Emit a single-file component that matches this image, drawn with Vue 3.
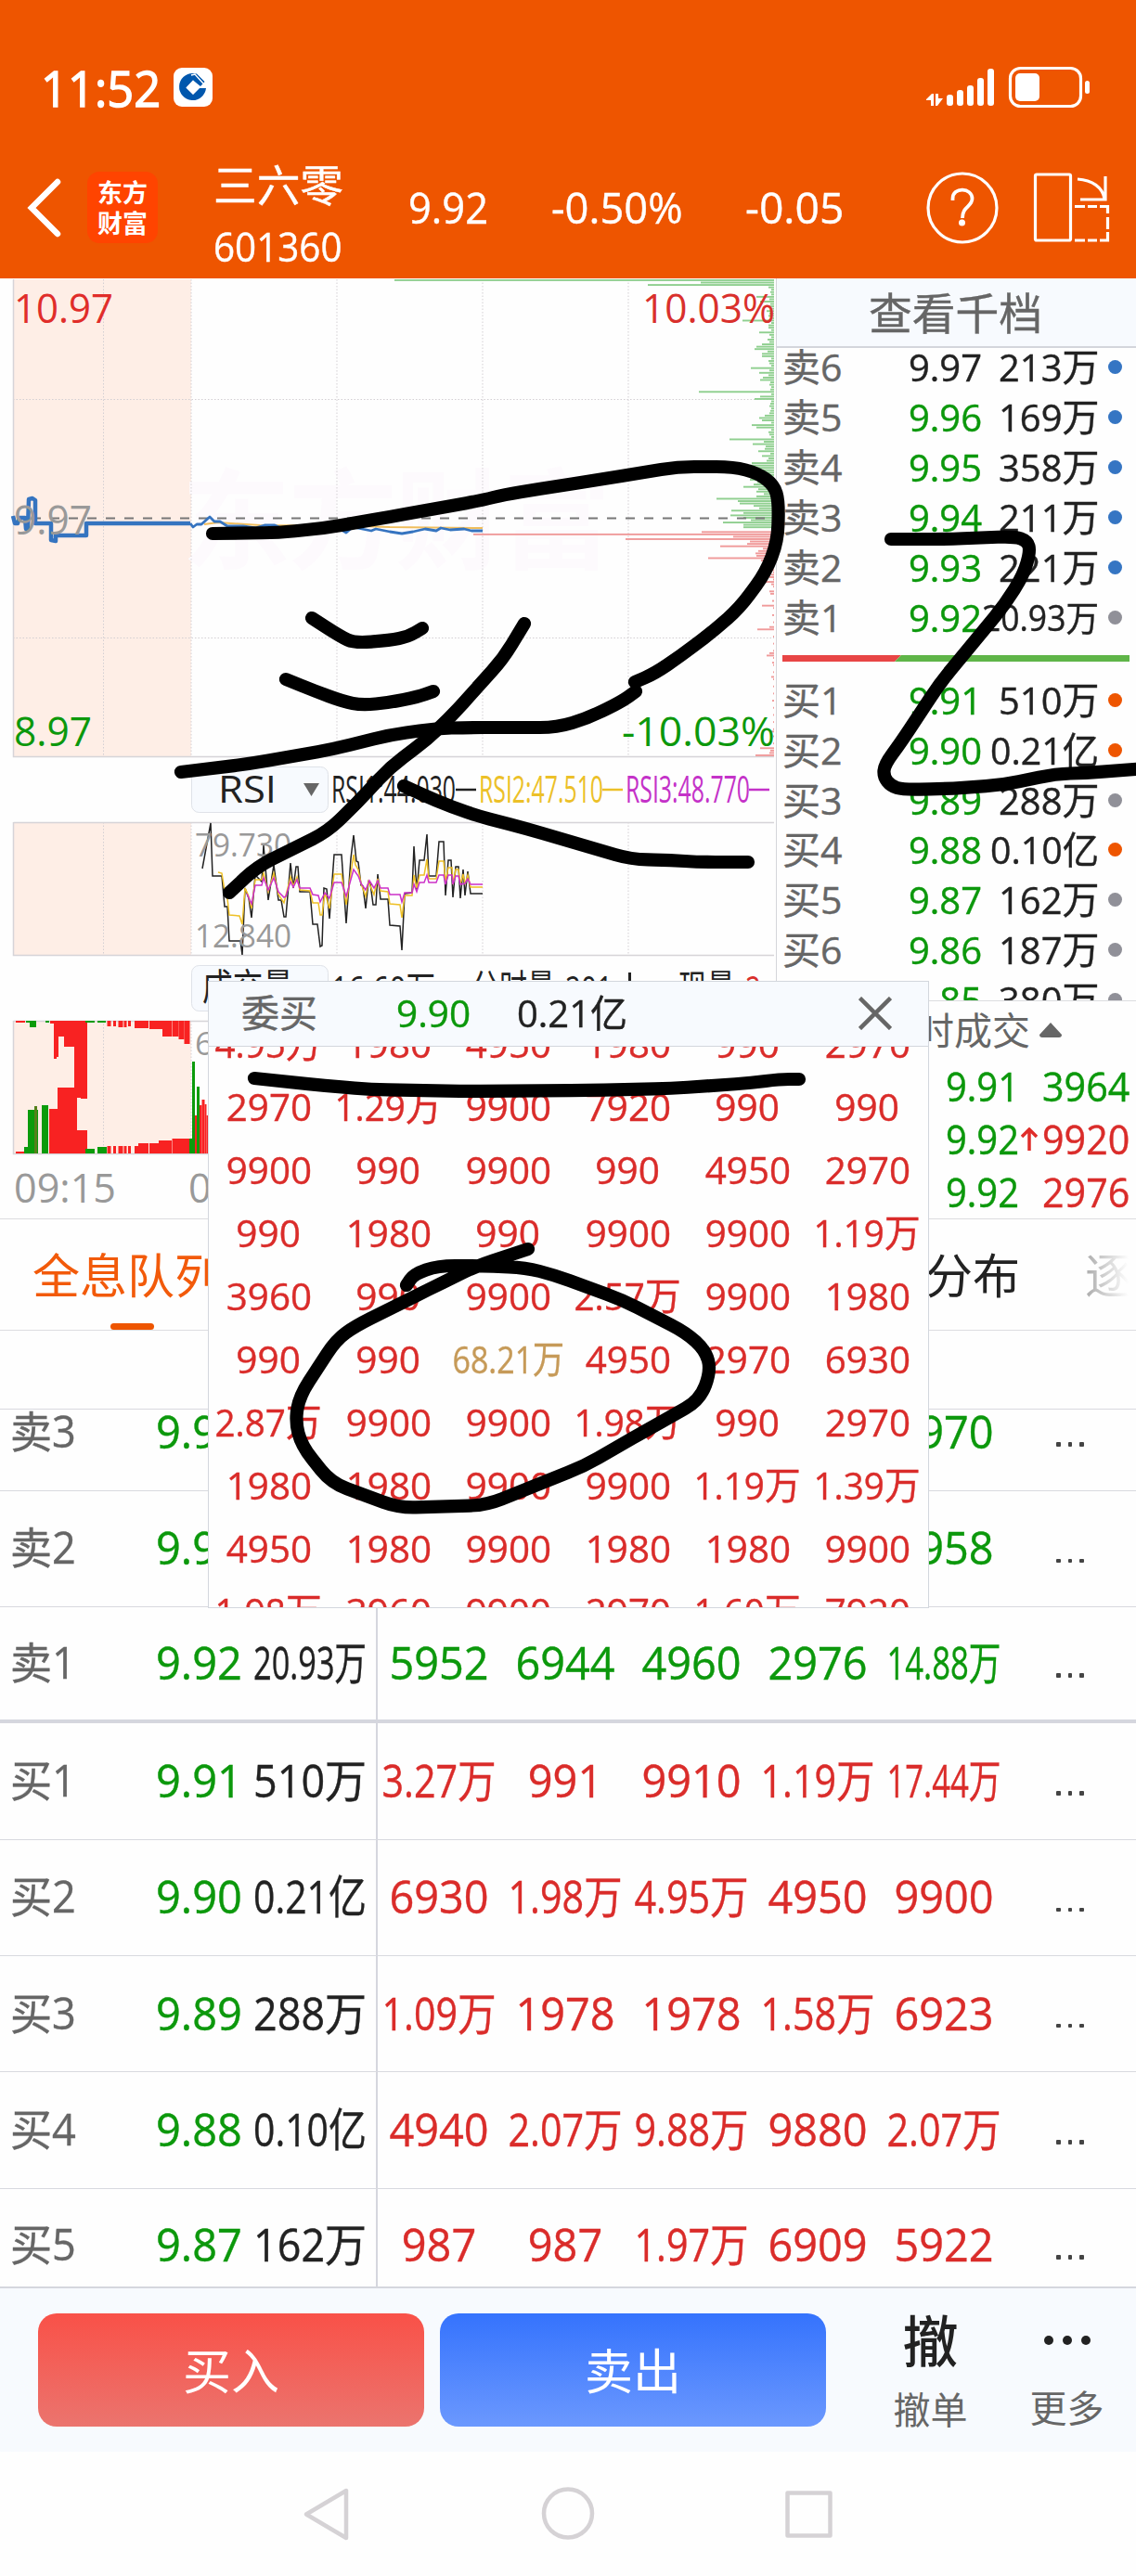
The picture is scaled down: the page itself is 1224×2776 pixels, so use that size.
<script setup>
// Squeezes or stretches a text run horizontally to a set width.
const vFit = {
  mounted(el, { value }) {
    if (value) el.style.transform = `scaleX(${value / el.offsetWidth})`
  },
}

const asks = [
  ['卖6', '9.97', '213万', 'blue', 'dark'],
  ['卖5', '9.96', '169万', 'blue'],
  ['卖4', '9.95', '358万', 'blue'],
  ['卖3', '9.94', '211万', 'blue'],
  ['卖2', '9.93', '221万', 'blue'],
  ['卖1', '9.92', '20.93万', 'grey'],
]
const bids = [
  ['买1', '9.91', '510万', 'orange'],
  ['买2', '9.90', '0.21亿', 'orange'],
  ['买3', '9.89', '288万', 'grey'],
  ['买4', '9.88', '0.10亿', 'orange'],
  ['买5', '9.87', '162万', 'grey'],
  ['买6', '9.86', '187万', 'grey'],
  ['买7', '9.85', '380万', 'grey'],
]
const bookWidth = (t) => (t.length === 6 ? 126 : t.includes('.') ? 117 : 108)

const trades = [
  ['9.91', '', '3964', 'green'],
  ['9.92', 'up', '9920', 'red'],
  ['9.92', '', '2976', 'red'],
]

const queue = [
  ['卖3', '9.94', '211万', 'green', ['1980', '5940', '9900', '2970', '2970']],
  ['卖2', '9.93', '221万', 'green', ['9930', '1986', '2979', '4965', '2958']],
  ['卖1', '9.92', '20.93万', 'green', ['5952', '6944', '4960', '2976', '14.88万']],
  ['买1', '9.91', '510万', 'red', ['3.27万', '991', '9910', '1.19万', '17.44万']],
  ['买2', '9.90', '0.21亿', 'red', ['6930', '1.98万', '4.95万', '4950', '9900']],
  ['买3', '9.89', '288万', 'red', ['1.09万', '1978', '1978', '1.58万', '6923']],
  ['买4', '9.88', '0.10亿', 'red', ['4940', '2.07万', '9.88万', '9880', '2.07万']],
  ['买5', '9.87', '162万', 'red', ['987', '987', '1.97万', '6909', '5922']],
]
const queueWidth = (t) => (t.includes('万') ? 123 : t.length * 26.8)

const orders = [
  ['4.95万', '1980', '4950', '1980', '990', '2970'],
  ['2970', '1.29万', '9900', '7920', '990', '990'],
  ['9900', '990', '9900', '990', '4950', '2970'],
  ['990', '1980', '990', '9900', '9900', '1.19万'],
  ['3960', '990', '9900', '2.57万', '9900', '1980'],
  ['990', '990', '68.21万', '4950', '2970', '6930'],
  ['2.87万', '9900', '9900', '1.98万', '990', '2970'],
  ['1980', '1980', '9900', '9900', '1.19万', '1.39万'],
  ['4950', '1980', '9900', '1980', '1980', '9900'],
  ['1.98万', '3960', '9900', '2970', '1.60万', '7920'],
]
const orderWidth = (t) => (t.length === 6 ? 121 : t.includes('万') ? 115 : t.length * 23.1)

// Depth profile: index of the one-cent price step, width of the bar.
const depth = {
  0: 409, 1: 79, 2: 136, 3: 6, 4: 3, 5: 4, 7: 19, 9: 15, 11: 5, 13: 8, 15: 6, 17: 34, 19: 6, 20: 6, 22: 16,
  23: 5, 25: 7, 27: 13, 28: 19, 29: 21, 30: 7, 31: 13, 32: 13, 34: 6, 37: 25, 38: 5, 39: 16, 40: 6,
  41: 12, 42: 15, 47: 81, 49: 15, 50: 21, 57: 10, 58: 16, 59: 13, 61: 24, 62: 19, 64: 6, 67: 48,
  68: 11, 69: 23, 70: 9, 71: 10, 72: 17, 74: 13, 75: 6, 76: 8, 77: 24, 78: 26, 79: 18, 80: 14, 81: 22,
  82: 24, 83: 20, 84: 26, 85: 18, 86: 22, 87: 33, 88: 17, 89: 19, 90: 11, 91: 19, 92: 62, 93: 39,
  94: 37, 95: 22, 96: 16, 97: 46, 98: 33, 99: 47, 100: 33, 101: 25, 102: 55, 103: 33, 104: 33,
  106: 78, 107: 324, 108: 44, 109: 160, 110: 26, 111: 29, 112: 58, 113: 12, 114: 17, 115: 20, 116: 19,
  117: 71, 118: 14, 119: 10, 120: 8, 122: 4, 124: 3, 125: 5, 127: 10, 128: 3, 131: 5, 132: 4, 135: 2,
  137: 13, 141: 2, 146: 5, 147: 18, 150: 1, 157: 5, 158: 8, 161: 2, 167: 3, 177: 2, 190: 3, 197: 15,
  198: 4, 199: 5, 200: 20,
}
const depthBars = Array.from({ length: 201 }, (_, i) => {
  const w = depth[i] ?? (i < 106 ? 3 + (i % 3) : i % 3 === 0 ? 1 : 0)
  return { x: 834 - w, y: 301 + i * 2.56, w, up: i < 105 }
}).filter((b) => b.w)

const rsi = {
  '#222': '218,936 227,887 229,944 239,944 242,977 245,977 247,1014 259,1014 261,1029 264,957 268,968 271,989 275,943 282,950 284,911 289,970 295,932 300,970 303,970 306,988 308,988 313,930 316,957 319,934 321,934 323,961 334,961 337,996 342,996 345,1020 347,1019 349,957 352,958 355,990 360,921 368,921 373,995 378,925 381,900 384,928 386,929 389,954 391,955 394,979 397,950 399,952 402,975 405,975 407,942 410,969 418,969 420,997 431,998 433,1024 436,963 444,962 446,912 449,960 452,927 457,927 460,899 462,944 470,944 473,907 478,907 480,965 483,927 486,927 488,967 491,934 494,934 496,968 499,937 501,965 504,939 507,963 520,963',
  '#eec026': '235,940 239,941 243,966 245,968 247,986 258,987 261,996 264,957 268,966 271,979 275,948 282,948 284,941 289,961 295,941 300,964 306,973 313,945 316,955 320,945 323,959 334,960 337,973 343,973 345,986 347,986 350,962 355,979 360,942 368,942 373,975 381,921 383,932 386,937 389,952 394,966 397,950 403,964 407,947 410,960 418,961 420,974 431,975 433,989 436,965 444,965 446,943 449,957 452,943 457,943 460,926 462,947 470,947 473,928 478,928 480,950 483,935 487,935 488,953 491,937 494,937 496,953 499,942 501,953 504,943 507,956 520,956',
  '#cc30c8': '266,963 271,974 275,954 282,954 284,946 289,959 295,946 300,961 306,967 308,966 313,950 316,956 320,948 323,957 334,957 337,964 343,965 345,972 350,962 355,968 360,951 368,951 373,966 381,937 386,944 389,952 394,959 398,949 403,957 407,949 410,957 418,957 420,964 431,964 433,972 436,962 444,962 446,953 449,961 452,951 457,951 460,943 462,951 470,951 473,943 478,943 480,953 483,943 487,943 488,953 491,944 494,944 496,953 501,952 504,947 507,953 520,953',
}

// Auction volume: x, y, width, height, fill.
const R = '#f82222'
const G = '#0b9b0b'
const volume = [
  [17, 1100, 10, 2, R], [28, 1100, 4, 2, G], [32, 1100, 7, 7, G], [49, 1100, 4, 2, G], [54, 1100, 4, 3, R],
  [58, 1100, 3, 41, R], [61, 1100, 2, 39, R], [63, 1100, 6, 17, R], [69, 1100, 11, 28, R],
  [80, 1100, 14, 83, R], [83, 1172, 3, 6, R], [92, 1100, 2, 84, R], [87, 1172, 6, 12, R],
  [92, 1100, 10, 2, G], [105, 1100, 9, 2, G],
  [115.5, 1100, 4, 6, R], [122, 1100, 3, 6, R], [127.5, 1100, 5, 7, R], [133.5, 1100, 3, 7, R],
  [138, 1100, 3, 6, R], [145, 1100, 15, 8, R], [161, 1100, 10, 9, R], [171, 1100, 4, 9, R],
  [175, 1100, 10, 17, R], [185.5, 1100, 7, 17, R], [192.5, 1100, 6, 20, R], [198.5, 1100, 6, 25, R],
  [17, 1241, 9, 2, R], [26, 1236, 4, 7, G], [30, 1196, 11, 47, G], [37, 1192, 3, 51, '#55801a'],
  [45, 1191, 7, 52, G], [53, 1195, 9, 48, R], [62, 1172, 21, 71, R], [83, 1218, 11, 25, R],
  [92, 1238, 10, 5, G], [105, 1236, 10, 7, G],
  [115.5, 1235, 4, 8, R], [122, 1235, 3, 8, R], [127.5, 1235, 5, 8, R], [133.5, 1235, 3, 8, R],
  [138, 1235, 3, 8, R], [145, 1235, 4, 8, R], [149, 1232, 11, 11, R], [161, 1232, 10, 11, R],
  [171, 1229, 14, 14, R], [185.5, 1227, 19, 16, R],
  [204, 1227, 3, 16, G], [207, 1144, 3, 99, G], [210, 1202, 2, 41, R], [212, 1171, 3, 72, G],
  [215, 1191, 2.5, 52, R], [217.5, 1185, 3, 58, R], [220.5, 1190, 2, 53, R], [222.5, 1202, 2, 41, R],
]

const verticals = [111.5, 206, 363, 520, 677]

const strokes = [
  [[229, 575], [300, 574], [350, 569], [420, 557], [520, 539], [543, 533], [600, 524], [670, 513], [730, 503], [790, 503], [817, 510], [834, 523], [839, 540], [838, 583], [825, 617], [797, 655], [770, 679], [733, 707], [705, 726], [684, 735]],
  [[685, 745], [670, 756], [633, 774], [600, 784], [503, 784], [470, 785], [420, 792], [360, 807], [270, 823], [195, 832]],
  [[336, 666], [367, 686], [382, 693], [420, 690], [440, 686], [455, 677]],
  [[308, 732], [340, 745], [370, 756], [390, 760], [420, 757], [450, 751], [467, 745]],
  [[565, 672], [542, 710], [487, 771], [460, 797], [420, 827], [385, 865], [353, 896], [277, 934], [247, 962]],
  [[435, 847], [470, 863], [510, 878], [567, 893], [680, 926], [723, 927], [753, 929], [806, 929]],
  [[960, 581], [1020, 581], [1093, 578], [1107, 583], [1110, 594], [1103, 619], [1083, 651], [1013, 736], [970, 801], [953, 824], [952, 837], [960, 847], [973, 851], [1020, 850], [1080, 846], [1137, 834], [1170, 833], [1236, 828]],
  [[274, 1162], [350, 1170], [400, 1174], [500, 1176], [633, 1175], [723, 1173], [810, 1167], [840, 1163], [861, 1163]],
  [[438, 1385], [446, 1373], [472, 1364], [514, 1364], [566, 1366], [597, 1374], [671, 1401], [739, 1436], [760, 1455], [766, 1477], [754, 1509], [697, 1541], [629, 1580], [524, 1622], [430, 1625], [357, 1598], [325, 1558], [318, 1531], [323, 1504], [362, 1444], [383, 1429], [461, 1390], [514, 1364], [569, 1346]],
]
// Polyline with rounded corners, so the pen strokes bend softly.
const smooth = (pts) => {
  let d = `M${pts[0]}`
  for (let i = 1; i < pts.length - 1; i++) {
    const [x, y] = pts[i]
    const [nx, ny] = pts[i + 1]
    const [px, py] = pts[i - 1]
    const nl = Math.hypot(nx - x, ny - y)
    const pl = Math.hypot(x - px, y - py)
    const r = Math.min(18, nl / 2) / nl
    const q = Math.min(18, pl / 2) / pl
    d += ` L${x - (x - px) * q} ${y - (y - py) * q} Q${x} ${y} ${x + (nx - x) * r} ${y + (ny - y) * r}`
  }
  return `${d} L${pts[pts.length - 1]}`
}
</script>

<template>
  <div class="screen">
    <header class="top">
      <div class="status">
        <span class="clock"><span v-fit="129" class="run">11:52</span></span>
        <svg class="bank" viewBox="0 0 42 42" width="42" height="42">
          <rect width="42" height="42" rx="9" fill="#fff" />
          <path d="M35 22A14.5 14.5 0 1 1 21 6L25 6.5L33.5 15L29 20L21 13.5L13.5 21.5L21 29L28 22Z" fill="#0057ad" />
          <path d="M21 13.5L28 21.5L21 28.500L13.500 21.500Z" fill="#fff" />
          <path d="M19 8L23 7L32 17" fill="none" stroke="#fff" stroke-width="1.400" />
        </svg>
        <svg class="phone" viewBox="998 68 180 50" width="180" height="50" fill="#fff">
          <path d="M998 106L1004 100H1006V113H1003V107H998ZM1008 100H1011V105H1016L1010 113H1008Z" />
          <rect x="1020" y="101" width="7" height="12" rx="3" />
          <rect x="1031" y="96" width="7" height="17" rx="3" />
          <rect x="1042" y="91" width="7" height="22" rx="3" />
          <rect x="1053" y="83" width="7" height="30" rx="3" />
          <rect x="1064" y="73" width="7" height="40" rx="3" />
          <rect x="1088.500" y="72.500" width="76" height="41" rx="11" fill="none" stroke="#fff" stroke-width="3.200" />
          <rect x="1094" y="78" width="26" height="30" rx="5" />
          <rect x="1169" y="86" width="5" height="14" rx="2.500" />
        </svg>
      </div>
      <div class="title">
        <svg class="back" viewBox="0 0 40 64" width="40" height="64">
          <path d="M34 4L6 32L34 60" fill="none" stroke="#fff" stroke-width="6.500" stroke-linecap="round" />
        </svg>
        <div class="logo"><span>东方</span><span>财富</span></div>
        <div class="name">
          <span class="cn"><span v-fit="140" class="run">三六零</span></span>
          <span class="code"><span v-fit="139" class="run">601360</span></span>
        </div>
        <span class="q q1"><span v-fit="86" class="run">9.92</span></span>
        <span class="q q2"><span v-fit="142" class="run">-0.50%</span></span>
        <span class="q q3"><span v-fit="107" class="run">-0.05</span></span>
        <svg class="tools" viewBox="996 183 204 82" width="204" height="82" fill="none" stroke="#fff" stroke-width="3.200">
          <circle cx="1037" cy="224" r="37" />
          <path d="M1026.500 216V214C1026.500 201 1047.500 202 1047.500 214C1047.500 223 1037 222 1037 235" stroke-width="3.800" />
          <circle cx="1036.500" cy="240" r="3.500" fill="#fff" stroke="none" />
          <rect x="1115.500" y="188" width="38" height="71" rx="1.500" />
          <path d="M1161 193C1177 194 1188 202 1190 214M1191 190V215H1164" />
          <path d="M1158 222.500H1169M1172 222.500H1182M1185 222.500H1193.500V230M1193.500 234V247M1193.500 250V259H1185M1182 259H1172M1169 259H1158" />
        </svg>
      </div>
    </header>

    <main class="market">
      <svg class="charts" viewBox="0 300 836 1014" width="836" height="1014">
        <rect x="14" y="301" width="192" height="515" fill="#feeee6" />
        <rect x="14" y="886" width="192" height="144" fill="#feeee6" />
        <rect x="14" y="1100" width="192" height="144" fill="#feeee6" />
        <text x="196" y="604" font-size="117" font-weight="700" fill="#fdfafd" textLength="462">东方财富</text>
        <g stroke="#d3cfd3" stroke-dasharray="1.500 2">
          <template v-for="x in verticals" :key="x">
            <path :d="`M${x} 301V815M${x} 886V1029M${x} 1100V1243`" />
          </template>
          <path d="M14 430.500H834M14 687.500H834" />
        </g>
        <g stroke="#d6d4d8" stroke-width="1.500" fill="none">
          <path d="M14.500 301V815.500H834M14.500 886.500H834M14.500 886V1029.500H834M14.500 1100.500H834M14.500 1100V1243.500H834" />
        </g>
        <rect
          v-for="(b, i) in depthBars" :key="i" :x="b.x" :y="b.y" :width="b.w" height="1.900"
          :fill="b.up ? '#8fcf8f' : '#f09a9a'"
        />
        <path d="M34 558.500H834" stroke="#777" stroke-width="1.800" stroke-dasharray="10 10" />
        <path d="M220 565L235 563L280 566L390 567L420 568L520 569" fill="none" stroke="#f0bd5c" stroke-width="2" />
        <g fill="none" stroke="#3574c0" stroke-linejoin="round">
          <path d="M14 556L16 564H19L21 558H27L28 570H30L31 538L35 537L38 539V564H55V582L60 583V577H93V564H205" stroke-width="4.500" />
          <path d="M205 564L208 568L212 565L217 565L226 557L231 562H237L245 567H262L275 569L285 566L296 566L310 572L345 574L352 573L358 569L364 569L373 574L380 568L390 570L400 572L405 570L420 573L433 575L445 573L458 570L470 572L475 569L485 571L500 570L508 572H520" stroke-width="2.800" />
        </g>
        <g class="txt" font-size="44">
          <text x="15" y="348" fill="#e02d2a" textLength="107" lengthAdjust="spacingAndGlyphs">10.97</text>
          <text x="692" y="348" fill="#d9302c" textLength="143" lengthAdjust="spacingAndGlyphs">10.03%</text>
          <text x="15" y="576" fill="#999" textLength="84" lengthAdjust="spacingAndGlyphs">9.97</text>
          <text x="15" y="804" fill="#0c980c" textLength="84" lengthAdjust="spacingAndGlyphs">8.97</text>
          <text x="670" y="804" fill="#0c980c" textLength="165" lengthAdjust="spacingAndGlyphs">-10.03%</text>
          <text x="15" y="1296" fill="#999" textLength="110" lengthAdjust="spacingAndGlyphs">09:15</text>
          <text x="203" y="1296" fill="#999" textLength="110" lengthAdjust="spacingAndGlyphs">09:30</text>
        </g>

        <rect x="206.500" y="826.500" width="147" height="49" rx="8" fill="#f7fafe" stroke="#dfe2e8" />
        <text class="txt" x="235" y="865" font-size="41" fill="#222" textLength="63" lengthAdjust="spacingAndGlyphs">RSI</text>
        <path d="M327 844H344L335.500 858Z" fill="#666" />
        <g class="txt" font-size="41">
          <text x="357" y="865" fill="#222" textLength="134" lengthAdjust="spacingAndGlyphs">RSI1:44.030</text>
          <text x="516" y="865" fill="#ecc028" textLength="134" lengthAdjust="spacingAndGlyphs">RSI2:47.510</text>
          <text x="674" y="865" fill="#c432c8" textLength="134" lengthAdjust="spacingAndGlyphs">RSI3:48.770</text>
        </g>
        <g stroke-width="2.500">
          <path d="M491 851H513" stroke="#222" />
          <path d="M649 851H671" stroke="#ecc028" />
          <path d="M807 851H829" stroke="#c432c8" />
        </g>
        <polyline
          v-for="(pts, c) in rsi" :key="c" :points="pts" fill="none" :stroke="c" stroke-width="1.500"
        />
        <g class="txt" font-size="35" fill="#999">
          <text x="210" y="923" textLength="104" lengthAdjust="spacingAndGlyphs">79.730</text>
          <text x="210" y="1021" textLength="104" lengthAdjust="spacingAndGlyphs">12.840</text>
          <text x="210" y="1137">6</text>
        </g>

        <rect x="206.500" y="1040.500" width="147" height="49" rx="8" fill="#f7fafe" stroke="#dfe2e8" />
        <g class="txt" font-size="40" fill="#222">
          <text x="218" y="1078" textLength="98" lengthAdjust="spacingAndGlyphs">成交量</text>
          <text x="357" y="1081" textLength="112" lengthAdjust="spacingAndGlyphs">16.60万</text>
          <text x="508" y="1079" textLength="90" lengthAdjust="spacingAndGlyphs">分时量</text>
          <text x="609" y="1081" textLength="51" lengthAdjust="spacingAndGlyphs">201</text>
          <path d="M678.500 1048V1078" stroke="#222" stroke-width="3" />
          <text x="731" y="1079" textLength="61" lengthAdjust="spacingAndGlyphs">现量</text>
          <text x="803" y="1081" fill="#d9302c" textLength="17" lengthAdjust="spacingAndGlyphs">2</text>
        </g>
        <rect v-for="(v, i) in volume" :key="i" :x="v[0]" :y="v[1]" :width="v[2]" :height="v[3]" :fill="v[4]" />
      </svg>

      <aside class="book">
        <div class="book-head"><span v-fit="187" class="run">查看千档</span></div>
        <div class="ladder">
          <div v-for="r in asks" :key="r[0]" class="level">
            <span class="lv-name"><span v-fit="64" class="run">{{ r[0] }}</span></span>
            <span class="lv-price" :class="r[4] || 'green'"><span v-fit="79" class="run">{{ r[1] }}</span></span>
            <span class="lv-vol" :class="{ small: r[2].length > 5 }"><span v-fit="bookWidth(r[2])" class="run right">{{ r[2] }}</span></span>
            <i class="dot" :class="r[3]"></i>
          </div>
          <div class="ratio">
            <svg viewBox="0 0 374 7" width="374" height="7">
              <path d="M0 0H128L121 7H0Z" fill="#e84545" />
              <path d="M128 0H374V7H121Z" fill="#5fb548" />
            </svg>
          </div>
          <div v-for="r in bids" :key="r[0]" class="level">
            <span class="lv-name"><span v-fit="64" class="run">{{ r[0] }}</span></span>
            <span class="lv-price green"><span v-fit="79" class="run">{{ r[1] }}</span></span>
            <span class="lv-vol"><span v-fit="bookWidth(r[2])" class="run right">{{ r[2] }}</span></span>
            <i class="dot" :class="r[3]"></i>
          </div>
        </div>
        <div class="ticks">
          <div class="ticks-head">
            <span>分时成交</span>
            <svg viewBox="0 0 24 16" width="24" height="16"><path d="M12 0L24 13Q24 16 21 16H3Q0 16 0 13Z" fill="#666" /></svg>
          </div>
          <div v-for="(t, i) in trades" :key="i" class="tick">
            <span class="tk-price green"><span v-fit="79" class="run">{{ t[0] }}</span></span>
            <span class="tk-arrow">
              <svg v-if="t[1]" viewBox="0 0 18 26" width="18" height="26"><path d="M9 25V2M1 10L9 2L17 10" fill="none" stroke="#e02d2a" stroke-width="3.500" /></svg>
            </span>
            <span class="tk-vol" :class="t[3]"><span v-fit="94" class="run">{{ t[2] }}</span></span>
          </div>
        </div>
      </aside>
    </main>

    <nav class="tabs">
      <div class="tab active">全息队列</div>
      <div class="tab dist">分布</div>
      <div class="tab fade">逐</div>
    </nav>
    <div class="strip"></div>

    <section class="queue">
      <div v-for="r in queue" :key="r[0]" class="qrow" :class="{ last: r[0] === '卖1' }">
        <div class="qinfo">
          <span class="q-name"><span v-fit="71" class="run">{{ r[0] }}</span></span>
          <span class="q-price green"><span v-fit="93" class="run">{{ r[1] }}</span></span>
          <span class="q-vol"><span v-fit="122" class="run">{{ r[2] }}</span></span>
        </div>
        <div class="qcells" :class="r[3]">
          <span v-for="(c, i) in r[4]" :key="i" class="qcell"><span v-fit="queueWidth(c)" class="run mid">{{ c }}</span></span>
          <span class="more"><i></i><i></i><i></i></span>
        </div>
      </div>
    </section>

    <footer class="actions">
      <button class="buy">买入</button>
      <button class="sell">卖出</button>
      <div class="act"><span class="big">撤</span><span class="cap">撤单</span></div>
      <div class="act">
        <span class="big"><svg viewBox="0 0 52 12" width="52" height="12" fill="#222"><circle cx="6" cy="6" r="5" /><circle cx="26" cy="6" r="5" /><circle cx="46" cy="6" r="5" /></svg></span>
        <span class="cap">更多</span>
      </div>
    </footer>
    <div class="sysnav">
      <svg viewBox="320 2675 584 66" width="584" height="66" fill="none" stroke="#d5d2d5" stroke-width="4.500" stroke-linejoin="round">
        <path d="M373 2684V2735L330 2709.500Z" />
        <circle cx="612" cy="2708.500" r="26" />
        <rect x="848.500" y="2686.500" width="46" height="46" />
      </svg>
    </div>

    <div class="popup">
      <div class="pop-head">
        <span class="p1"><span v-fit="82" class="run">委买</span></span>
        <span class="p2 green"><span v-fit="80" class="run">9.90</span></span>
        <span class="p3"><span v-fit="119" class="run">0.21亿</span></span>
        <svg viewBox="0 0 36 36" width="36" height="36"><path d="M1.500 1.500L34.500 34.500M34.500 1.500L1.500 34.500" stroke="#666" stroke-width="4.500" /></svg>
      </div>
      <div class="pop-body">
        <div class="grid">
          <template v-for="(row, i) in orders" :key="i">
            <span v-for="(c, j) in row" :key="j" class="ocell" :class="{ gold: c.length === 6 }">
              <span v-fit="orderWidth(c)" class="run mid">{{ c }}</span>
            </span>
          </template>
        </div>
      </div>
    </div>

    <svg class="ink" viewBox="0 0 1224 2776" width="1224" height="2776" fill="none" stroke="#000" stroke-width="14.200" stroke-linecap="round" stroke-linejoin="round">
      <path v-for="(s, i) in strokes" :key="i" :d="smooth(s)" />
    </svg>
  </div>
</template>

<style>
body { background: #fdfdfe; }
</style>

<style scoped>
.screen {
  position: relative;
  display: flex;
  flex-direction: column;
  width: 1224px;
  height: 2776px;
  overflow: hidden;
  background: #fefefe;
  color: #222;
  font-family: "Open Sans", "Noto Sans CJK SC", sans-serif;
  line-height: 1;
}
.screen * { box-sizing: border-box; }
.run { display: inline-block; flex: none; white-space: nowrap; transform-origin: 0 50%; -webkit-text-stroke: 0.4px currentColor; }
.run.right { transform-origin: 100% 50%; }
.run.mid { transform-origin: 50% 50%; }
.green { color: #0c980c; }
.red { color: #da2c2a; }
.dark { color: #222; }

.top { flex: none; height: 300px; background: #ee5500; color: #fff; }
.status { display: flex; align-items: center; height: 118px; padding: 70px 46px 0 44px; }
.clock { width: 143px; font-size: 53px; }
.clock .run { -webkit-text-stroke: 1.4px #fff; }
.phone { margin-left: auto; }
.title { display: flex; align-items: center; height: 182px; padding-top: 29px; }
.title > * { flex: none; }
.back { margin-left: 28px; }
.logo {
  display: flex; flex-direction: column; align-items: center; justify-content: center; gap: 6px;
  width: 76px; height: 77px; margin-left: 26px; border-radius: 13px; background: #ff4400;
  font-size: 27px; font-weight: 700;
}
.name { display: flex; flex-direction: column; width: 140px; height: 112px; margin-left: 60px; padding-top: 6px; }
.cn { height: 58px; font-size: 47px; line-height: 50px; }
.code { height: 48px; font-size: 43px; line-height: 68px; }
.q { font-size: 45px; height: 45px; line-height: 45px; }
.q1 { width: 154px; margin-left: 70px; }
.q2 { width: 209px; }
.q3 { width: 193px; }

.market { flex: none; display: flex; height: 1014px; border-bottom: 1px solid #dcdde0; }
.charts { flex: none; display: block; font-family: "Open Sans", "Noto Sans CJK SC", sans-serif; }
.charts .txt { stroke-width: 0; }
.book { display: flex; flex-direction: column; width: 388px; border-left: 1.5px solid #d4d5da; }
.book-head {
  flex: none; height: 75px; padding: 14px 0 0 99px; background: #f7fafe; border-bottom: 2px solid #d3d5dc;
  color: #666; font-size: 47px;
}
.ladder { flex: none; height: 703px; overflow: hidden; }
.level { display: flex; align-items: center; height: 53.9px; padding: 0 15px 0 6px; font-size: 41px; }
.level:first-child { margin-top: -6px; }
.lv-name { flex: none; width: 136px; color: #666; }
.lv-price { flex: none; width: 80px; }
.lv-vol { display: flex; justify-content: flex-end; flex: 1; min-width: 0; }
.lv-vol.small { font-size: 38px; }
.dot { flex: none; width: 15px; height: 15px; margin-left: 10px; border-radius: 50%; }
.dot.blue { background: #3575c3; }
.dot.grey { background: #909098; }
.dot.orange { background: #ee5500; }
.ratio { display: flex; align-items: center; height: 35px; padding: 0 0 1px 6px; }
.ticks { border-top: 1px solid #dcdde0; }
.ticks-head { display: flex; align-items: center; gap: 10px; height: 63px; padding: 0 0 1px 109px; color: #666; font-size: 41px; }
.tick { display: flex; align-items: center; height: 57px; padding-left: 182px; font-size: 43px; }
.tk-price { flex: none; width: 81px; }
.tk-arrow { flex: none; display: flex; width: 23px; }
.tk-vol { flex: none; width: 95px; }

.tabs { flex: none; display: flex; height: 120px; padding-left: 35px; border-bottom: 1px solid #dcdde0; font-size: 51px; }
.tab { position: relative; padding-top: 35px; line-height: 51px; }
.tab.active { width: 962px; color: #f25a0a; }
.tab.active::after { content: ""; position: absolute; left: 84px; top: 112px; width: 47px; height: 7px; border-radius: 4px; background: #ee5500; }
.tab.dist { width: 172px; }
.tab.fade { width: 52px; background: linear-gradient(90deg, #aaa, #fefefe 90%); background-clip: text; color: transparent; }
.strip { flex: none; height: 84px; }

.queue { display: flex; flex-direction: column; justify-content: flex-end; flex: none; height: 948px; overflow: hidden; border-top: 1px solid #d8d9df; border-bottom: 2px solid #d5d7de; }
.qrow { flex: none; display: flex; height: 125.3px; border-bottom: 1.5px solid #d8d9df; font-size: 49px; }
.qrow.last { border-bottom: 4px solid #d5d6de; }
.qrow:last-child { height: 105.5px; border-bottom: none; }
.qrow:last-child .qinfo, .qrow:last-child .qcells { height: 122px; }
.qinfo { display: flex; align-items: center; width: 407px; padding: 0 0 2px 11px; border-right: 2px solid #d5d6de; }
.q-name { flex: none; width: 157px; color: #666; font-size: 47px; }
.q-price { flex: none; width: 105px; }
.q-vol { flex: none; width: 122px; }
.qcells { display: flex; align-items: center; padding-bottom: 2px; }
.qcell { display: flex; justify-content: center; width: 136px; }
.qcell:first-child { margin-left: -2px; }
.more { display: flex; gap: 8px; width: 136px; padding-top: 28px; justify-content: center; }
.more i { width: 4.5px; height: 4.5px; background: #444; border-radius: 1px; }

.actions { flex: none; display: flex; align-items: center; height: 176px; padding-left: 41px; background: #f7fafe; }
.actions button {
  width: 416px; height: 122px; margin-right: 17px; padding: 0 0 4px; border: 0; border-radius: 20px; color: #fff;
  font-family: inherit; font-size: 52px;
}
.buy { background: linear-gradient(#f95148, #eb746e); }
.sell { background: linear-gradient(#3573fd, #6b98fe); }
.act { display: flex; flex-direction: column; align-items: center; width: 147px; height: 122px; }
.act:nth-of-type(1) { margin-left: 22px; }
.big { display: flex; align-items: center; height: 60px; font-size: 60px; font-weight: 500; }
.cap { margin-top: 24px; color: #666; font-size: 40px; }
.sysnav { flex: none; display: flex; align-items: flex-start; justify-content: center; height: 134px; padding-top: 33px; background: #fefefe; }

.popup { position: absolute; left: 224px; top: 1057px; width: 777px; height: 676px; background: #fefefe; border: 1.500px solid #d3d7dd; }
.pop-head { display: flex; align-items: center; height: 70px; padding: 0 39px 2px 35px; background: #f7fafe; border-bottom: 1.500px solid #d3d7dd; font-size: 41px; }
.p1 { width: 167px; color: #666; }
.p2 { width: 130px; }
.p3 { flex: 1; }
.pop-body { height: 604px; overflow: hidden; }
.grid { display: grid; grid-template-columns: repeat(6, 129px); grid-auto-rows: 68px; margin: -38px 0 0; color: #da2c2a; font-size: 41px; }
.ocell { display: flex; align-items: center; justify-content: center; }
.gold { color: #c69a58; }
.ink { position: absolute; inset: 0; }
</style>
